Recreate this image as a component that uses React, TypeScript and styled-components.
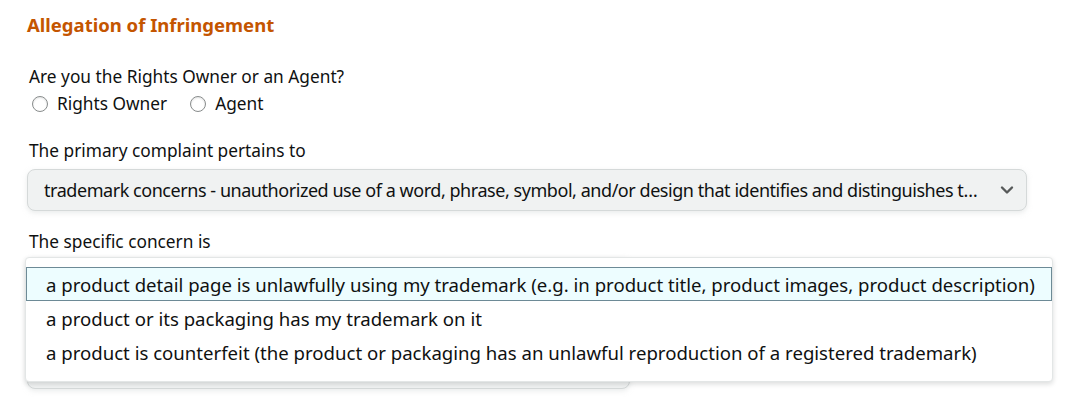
import React from "react";
import styled, { createGlobalStyle } from "styled-components";

const Global = createGlobalStyle`
  html, body { margin: 0; padding: 0; background: #fff; }
  body { font-family: "Noto Sans", "Open Sans", Arial, sans-serif; color: #0f1111; }
  * { box-sizing: border-box; }
`;

const Page = styled.div`
  width: 1080px;
  height: 406px;
  overflow: hidden;
  padding: 14px 0 0 27px;
`;

const Section = styled.div`
  width: 1000px;
  display: flex;
  flex-direction: column;
`;

const Heading = styled.h2`
  margin: 0;
  font-size: 18.5px;
  line-height: 22px;
  font-weight: 700;
  color: #c45500;
`;

const Label = styled.div<{ $mt: number }>`
  margin-top: ${(p) => p.$mt}px;
  padding-left: 2px;
  font-size: 17.3px;
  line-height: 22px;
  color: #0f1111;
`;

const RadioRow = styled.div`
  display: flex;
  align-items: center;
  gap: 23px;
  margin-top: 5px;
  padding-left: 5px;
  height: 22px;
`;

const RadioItem = styled.label`
  display: flex;
  align-items: center;
  gap: 9px;
  font-size: 17.3px;
  line-height: 22px;
`;

const Circle = styled.span`
  width: 16px;
  height: 16px;
  border-radius: 50%;
  border: 1px solid #888c8c;
  background: #fff;
  box-shadow: inset 0 1px 2px rgba(15, 17, 17, 0.12);
`;

const SelectButton = styled.div<{ $width: number; $height: number; $mt: number }>`
  margin-top: ${(p) => p.$mt}px;
  width: ${(p) => p.$width}px;
  height: ${(p) => p.$height}px;
  background: #f0f2f2;
  border: 1px solid #d5d9d9;
  border-radius: 8px;
  box-shadow: 0 2px 5px rgba(213, 217, 217, 0.5);
  display: flex;
  align-items: center;
  padding: 0 12px 0 16px;
  gap: 12px;
  font-size: 18px;
  color: #0f1111;
  position: relative;
`;

const SelectText = styled.span`
  flex: 1;
  white-space: nowrap;
  overflow: hidden;
  letter-spacing: -0.45px;
`;

const Popover = styled.div`
  position: absolute;
  left: -3px;
  top: -1px;
  width: 1028px;
  background: #fff;
  border: 1px solid #e3e6e6;
  border-radius: 4px;
  box-shadow: 0 2px 5px rgba(15, 17, 17, 0.15);
  padding: 9px 0 12px;
  display: flex;
  flex-direction: column;
`;

const Option = styled.div<{ $active?: boolean }>`
  height: 34px;
  display: flex;
  align-items: center;
  padding-left: ${(p) => (p.$active ? 19 : 20)}px;
  font-size: 18.6px;
  color: #0f1111;
  white-space: nowrap;
  background: ${(p) => (p.$active ? "#edfdff" : "transparent")};
  border: ${(p) => (p.$active ? "1px solid #6d8a96" : "none")};
`;

const Chevron = () => (
  <svg width="14" height="10" viewBox="0 0 14 10">
    <path d="M2 2.5 L7 7.5 L12 2.5" fill="none" stroke="#565959" strokeWidth="2.4" strokeLinecap="round" strokeLinejoin="round" />
  </svg>
);

export default function App() {
  return (
    <Page>
      <Global />
      <Section>
        <Heading>Allegation of Infringement</Heading>
        <Label $mt={30}>Are you the Rights Owner or an Agent?</Label>
        <RadioRow>
          <RadioItem>
            <Circle />
            Rights Owner
          </RadioItem>
          <RadioItem>
            <Circle />
            Agent
          </RadioItem>
        </RadioRow>
        <Label $mt={25}>The primary complaint pertains to</Label>
        <SelectButton $width={1000} $height={42} $mt={7}>
          <SelectText>
            trademark concerns - unauthorized use of a word, phrase, symbol, and/or design that identifies and distinguishes t…
          </SelectText>
          <Chevron />
        </SelectButton>
        <Label $mt={20}>The specific concern is</Label>
        <SelectButton $width={603} $height={132} $mt={4}>
          <Popover>
            <Option $active>
              a product detail page is unlawfully using my trademark (e.g. in product title, product images, product description)
            </Option>
            <Option>a product or its packaging has my trademark on it</Option>
            <Option>
              a product is counterfeit (the product or packaging has an unlawful reproduction of a registered trademark)
            </Option>
          </Popover>
        </SelectButton>
      </Section>
    </Page>
  );
}
